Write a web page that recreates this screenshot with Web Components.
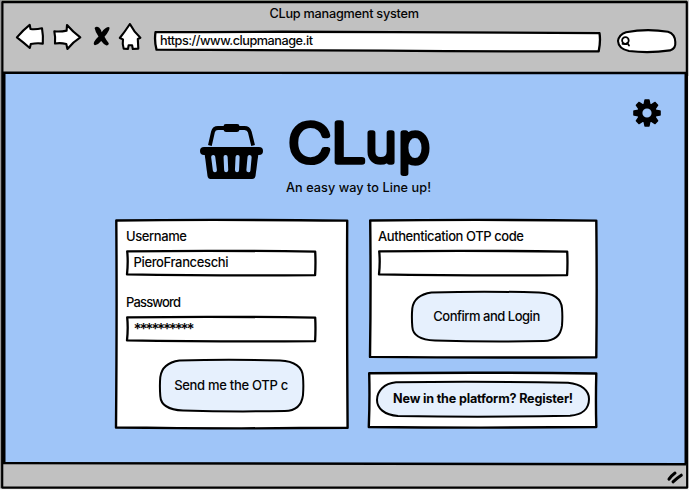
<!DOCTYPE html>
<html lang="en">
<head>
<meta charset="utf-8">
<title>CLup managment system</title>
<style>
html,body{margin:0;width:689px;height:490px;overflow:hidden;background:#fff}
body{font:13px Inter,"Liberation Sans",sans-serif;font-weight:450;color:#050505}
</style>
</head>
<body>
<clup-app></clup-app>
<script>
const define=(name,html,ready)=>customElements.define(name,class extends HTMLElement{
  constructor(){super();this.attachShadow({mode:'open'}).innerHTML=html}
  connectedCallback(){if(ready)ready.call(this,this.shadowRoot)}
});

/* One line of text, tracked so that it fills the given width. */
define('fit-text',`<style>:host{display:block;line-height:16px;white-space:pre;width:max-content}</style><span><slot></slot></span>`,function(){
  this.style.fontSize=(this.getAttribute('size')||13)+'px';
  const w=+this.getAttribute('width'),n=this.textContent.length,r=document.createRange();
  r.selectNodeContents(this);
  const cur=r.getBoundingClientRect().width;
  if(w&&cur)this.style.letterSpacing=((w-cur)/(n-1))+'px';
});

/* A box with a hand-drawn outline behind its slotted content. */
define('sketch-box',`<style>
:host{display:block;box-sizing:border-box;position:relative;isolation:isolate}
svg{position:absolute;inset:0;width:100%;height:100%;overflow:visible;z-index:-1}
path{stroke:#000;stroke-linejoin:round;stroke-linecap:round}
</style><svg><path/></svg><slot></slot>`,function(s){
  const p=s.querySelector('path');
  p.setAttribute('d',this.getAttribute('path')||'');
  p.setAttribute('fill',this.getAttribute('fill')||'#fff');
  p.setAttribute('stroke-width',this.getAttribute('stroke')||2.4);
});

define('nav-icons',`<style>:host{display:block;width:130px;height:30px}svg{display:block}</style>
<svg width="130" height="30" viewBox="14 22 130 30" fill="#fff" stroke="#000" stroke-width="2.1" stroke-linejoin="round" stroke-linecap="round">
<path d="M16.9 37.4Q23 30 29.7 24.8L30.5 29Q36 29.6 42 28.2Q43.4 36 42.8 43.6Q37 42.8 30.8 44L29.8 48Q23.5 42.5 16.9 37.4Z"/>
<path d="M54.3 31.2Q60 32 66.6 30.6L67 25Q73 32 80.3 37.4Q73 42 67.4 49L66.3 44Q60 42.4 55 43.6Q55.6 37 54.3 31.2Z"/>
<path stroke="none" fill="#000" d="M94.6 28Q96.5 25.8 99.3 27.8Q101 29.6 101.7 32.2Q104.8 27 109.2 26.9Q110.1 28.2 108.7 30.8Q107 34.2 104.5 36.8Q106 39.8 108.8 43.2Q108.9 45.4 106.4 45.4Q103.8 44.6 101.2 41Q98.4 44.6 95 45.3Q93 44.4 94.2 41.8Q96 38.8 98.5 36.6Q95.3 32 94.6 28Z"/>
<path d="M129.9 24Q125 31.5 119.8 38L123 39.4Q122.2 44 123.7 48.8L128 48.9L128.6 45.3L132.1 45.2L132.8 49L138.3 48.6L137.8 39L140.4 37.8Q134 32 129.9 24Z"/>
</svg>`);

define('browser-bar',`<style>
:host{display:block;height:72px;box-sizing:border-box;padding-top:6px;background:#c1c1c1}
.title{padding-left:269.5px;height:16px}
.tools{display:flex;padding-left:14px}
.address{width:447px;height:20px;margin:9px 0 0 10px;padding:2px 0 0 6px}
.search{width:59px;height:23px;margin:7px 0 0 15.5px;padding:6px 0 0 3px}
.search svg{display:block}
</style>
<div class="title"><fit-text width="149.5" size="12.7">CLup managment system</fit-text></div>
<div class="tools"><nav-icons></nav-icons>
<sketch-box class="address" stroke="2.3" path="M1.5 1.2Q120 .4 240 1.1T445.5 2.2Q446.8 10 444.7 20.3Q330 20.5 230 19.7T2.5 18.6Q.2 10 1.5 1.2Z"><fit-text width="153" size="12.7">https://www.clupmanage.it</fit-text></sketch-box>
<sketch-box class="search" stroke="2.1" path="M9 3.2Q30 -.8 51 2.8Q58 5 58.3 13Q59 19.6 53 21.4Q32 24.5 12 22Q1.5 20 1 12Q2 5.5 9 3.2Z"><svg width="12" height="13" fill="none" stroke="#000" stroke-width="1.8" stroke-linecap="round"><circle cx="5.4" cy="5.5" r="3.3"/><path d="M2.5 8.9l3.8.2M7.3 7.9l1.7 2.6"/></svg></sketch-box>
</div>`);

define('basket-icon',`<style>:host{display:block;width:64px;height:56px}svg{display:block}</style>
<svg width="64" height="56" viewBox="200 123 64 56"><path fill="none" stroke="#000" stroke-width="3.8" d="M209.9 145.5L213 131.8Q214 128 218 128H244.5Q248.5 128 249.8 132L253.1 145.5"/>
<rect x="223.5" y="124" width="16" height="8" rx="2.4"/><rect x="200" y="147" width="63" height="8" rx="4"/>
<path d="M204.5 153H258.5L255.5 176Q255 179 252 179H210.5Q208 179 207.5 176Z"/>
<g stroke="#9fc5f8" stroke-width="4.1" stroke-linecap="round"><path d="M213.2 157L214.9 170.2M225.6 157L226.2 170.2M237.6 157L237 170.2M249.6 157L248.4 170.2"/></g></svg>`);

define('gear-icon',`<style>:host{display:block;width:28px;height:28px}svg{display:block}</style>
<svg width="28" height="28" viewBox="-14 -14 28 28"><g id="g"></g><circle r="7.2" fill="none" stroke="#000" stroke-width="5.2"/></svg>`,function(s){
  s.getElementById('g').innerHTML=[0,45,90,135,180,225,270,315].map(a=>`<path transform="rotate(${a})" d="M-3.6 -8.5L-2.7 -13Q-2.6 -13.8 -2 -13.8H2Q2.6 -13.8 2.7 -13L3.6 -8.5Z"/>`).join('');
});

define('brand-name',`<style>:host{display:block;width:150px;height:64px}svg{display:block;overflow:visible}
text{font:200 53px Inter,"Liberation Sans",sans-serif;fill:#000;stroke:#000;stroke-width:5.6;stroke-linejoin:round;stroke-linecap:round}</style>
<svg width="150" height="64"><text y="46.5"><tspan x="2.5" textLength="42.5" lengthAdjust="spacingAndGlyphs">C</tspan><tspan x="45.5" textLength="34" lengthAdjust="spacingAndGlyphs">L</tspan><tspan x="79.5">u</tspan><tspan x="112.5">p</tspan></text></svg>`);

define('text-field',`<style>:host{display:block}sketch-box{margin-top:6px;width:191px;height:26px;padding:4px 0 0 7.5px}</style>
<slot name="label"></slot><sketch-box stroke="2.3" path="M1.2 1.3Q90 .2 189.2 1.6Q189.8 13 189.1 25.2Q90 25.9 1 24.4Q2.3 12 1.2 1.3Z"><slot></slot></sketch-box>`);

define('sketch-button',`<style>:host{display:block}sketch-box{width:100%;height:100%;display:flex;align-items:center;justify-content:center}</style><sketch-box fill="#e6f0fd" stroke="2"><slot></slot></sketch-box>`,function(s){
  const p=s.querySelector('sketch-box').shadowRoot.querySelector('path'),w=this.offsetWidth,h=this.offsetHeight,r=Math.min(24,h*.6);
  p.setAttribute('d',`M${r*.85} 1.4Q${w/2} 0 ${w-r} 1.5Q${w-2} 2.5 ${w-1} ${h*.34}Q${w-.3} ${h*.5} ${w-1} ${h*.68}Q${w-3} ${h-1.2} ${w-r*.8} ${h-1}Q${w/2} ${h} ${r} ${h-1.5}Q2 ${h-2.5} 1.3 ${h*.7}Q.5 ${h*.5} 1.3 ${h*.34}Q3 4 ${r*.85} 1.4Z`);
});

/* Button with fully rounded ends. */
define('pill-button',`<style>:host{display:block}sketch-box{width:100%;height:100%;display:flex;align-items:center;justify-content:center}</style><sketch-box fill="#e6f0fd" stroke="2" path="M20 1.3Q105 .2 192 1.8C206 3 213 10 213 18C213 28 206 34 194 34.7Q110 36.6 22 35C8 34 1 27 1 19C1 10 8 2.5 20 1.3Z"><slot></slot></sketch-box>`);

define('login-page',`<style>
:host{display:block;height:392px;position:relative;isolation:isolate;background:#9fc5f8}
.head{display:flex;height:146.5px;box-sizing:border-box;padding-left:200px}
basket-icon{margin-top:51px}
.brand{margin:43px 0 0 22px;width:150px}
gear-icon{margin:27px 0 0 197px}
.cards{display:flex;padding-left:115px;gap:21px}
.left{width:234px;height:210px;padding:9px 0 0 11px}
.right{display:flex;flex-direction:column;gap:13.5px;width:228px;margin-left:-1px}
.otp{height:139.5px;padding:9px 0 0 9px}
.reg{height:56.5px;padding:9px 0 0 7px}
.second{margin-top:18px}
.send{width:145px;height:53px;margin:17px 0 0 32.5px}
.confirm{width:152px;height:51px;margin:15px 0 0 32.5px}
.register{width:214px;height:36px;font-weight:700}
.brand fit-text{margin-top:.5px}
</style>
<div class="head"><basket-icon></basket-icon><div class="brand"><brand-name></brand-name><fit-text width="145" size="12.7">An easy way to Line up!</fit-text></div><gear-icon></gear-icon></div>
<div class="cards">
<sketch-box class="left" path="M1.3 1.5Q90 .3 232.2 1.6Q231.8 90 232.6 208.8Q110 210 1 208.5Q2 100 1.3 1.5Z">
<text-field><fit-text slot="label" width="61">Username</fit-text><fit-text width="95">PieroFranceschi</fit-text></text-field>
<text-field class="second"><fit-text slot="label" width="55">Password</fit-text><fit-text width="61" size="15" style="font-weight:600;padding-top:1px">**********</fit-text></text-field>
<sketch-button class="send"><fit-text width="114">Send me the OTP c</fit-text></sketch-button>
</sketch-box>
<div class="right">
<sketch-box class="otp" path="M1.2 1.5Q110 .3 227.3 1.6Q228 70 227.3 138.2Q110 138.8 1 137.9Q2 70 1.2 1.5Z">
<text-field><fit-text slot="label" width="146">Authentication OTP code</fit-text></text-field>
<sketch-button class="confirm"><fit-text width="107">Confirm and Login</fit-text></sketch-button>
</sketch-box>
<sketch-box class="reg" path="M.2 1.3Q110 .1 227.3 1.5Q226.6 28 227.3 55Q110 56.2 -.2 55Q.9 28 .2 1.3Z">
<pill-button class="register"><fit-text width="180" size="12.6">New in the platform? Register!</fit-text></pill-button>
</sketch-box>
</div></div>`);

define('status-bar',`<style>:host{display:flex;justify-content:flex-end;height:26px;background:#c1c1c1}svg{display:block}</style>
<svg width="24" height="26" viewBox="665 464 24 26" fill="none" stroke="#000" stroke-width="3" stroke-linecap="round"><path d="M669 479.2Q671.5 475.5 675 473M673 481.8Q677 478 681.3 475.2"/></svg>`);

define('clup-app',`<style>:host{display:block;width:689px;height:490px;position:relative;overflow:hidden}
.lines{position:absolute;inset:0;pointer-events:none}</style>
<browser-bar></browser-bar><login-page></login-page><status-bar></status-bar>
<svg class="lines" width="689" height="490" fill="none">
<path fill="#81857d" d="M0 0H689V2H0Z"/><path fill="#9a9a9a" d="M0 0H2V490H0Z"/><path fill="#c8c8c8" d="M687 0H689V76H687Z"/><path fill="#f4f4f4" d="M687.5 76H689V490H0V488.6H687.5Z"/>
<path stroke="#000" stroke-width="2.2" stroke-linejoin="round" d="M2.4 2.2Q350 1.5 686.8 2.1Q686.2 250 687.2 487.6Q340 488.6 2.2 487.6Q3 240 2.4 2.2Z"/>
<path stroke="#000" stroke-width="2.4" d="M3 72.8Q350 72 686 73M3 463.1Q350 462.5 686 464.3"/>
<path stroke="#000" stroke-width="3" d="M4 73V463M686 73V464"/>
</svg>`);
</script>
</body>
</html>
